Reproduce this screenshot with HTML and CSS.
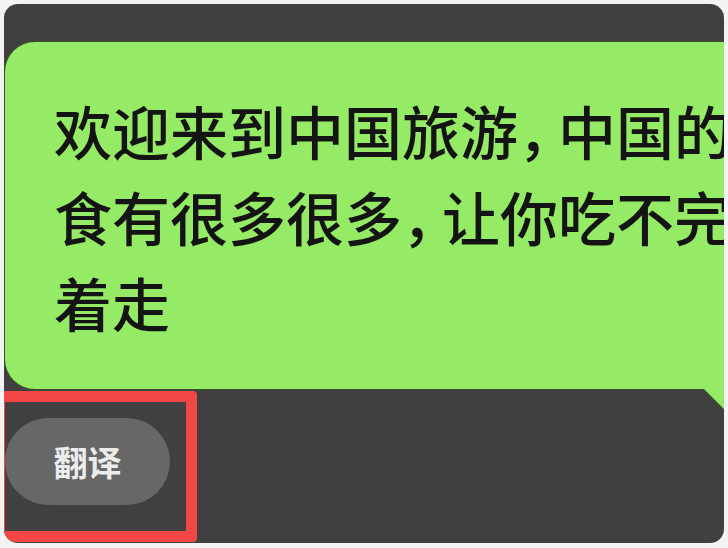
FILE: index.html
```html
<!DOCTYPE html>
<html lang="zh-CN">
<head>
<meta charset="utf-8">
<title>翻译</title>
<link rel="stylesheet" href="styles.css">
</head>
<body>
<div class="frame">
  <div class="bubble">
    <div class="line">欢迎来到中国旅游<span class="punct">，</span>中国的</div>
    <div class="line">食有很多很多<span class="punct">，</span>让你吃不完</div>
    <div class="line">着走</div>
  </div>
  <div class="actions">
    <div class="pill">翻译</div>
  </div>
  <div class="highlight"></div>
</div>
</body>
</html>
```

FILE: styles.css
```css
html, body {
  margin: 0;
  padding: 0;
  background: #f3f3f3;
}
body {
  width: 728px;
  height: 548px;
  overflow: hidden;
  font-family: "Noto Sans CJK SC", "Noto Sans", sans-serif;
}
.frame {
  position: relative;
  margin: 4px;
  width: 720px;
  height: 539px;
  border-radius: 14px;
  background: #404040;
  overflow: hidden;
  padding-top: 38px;
  box-sizing: border-box;
}
.bubble {
  position: relative;
  margin-left: 1px;
  width: 780px;
  box-sizing: border-box;
  padding: 45px 0 44px 49px;
  background: #95ea66;
  border-radius: 30px;
  filter: drop-shadow(0 0 1px #2f6a1c);
  color: #141414;
}
.bubble::after {
  content: "";
  position: absolute;
  left: 697px;
  top: calc(100% - 2px);
  width: 60px;
  height: 60px;
  background: #95ea66;
  clip-path: polygon(0 0, 100% 0, 100% 100%);
}
.line {
  font-size: 58px;
  font-weight: 500;
  line-height: 86px;
  white-space: nowrap;
}
.punct {
  letter-spacing: -18px;
}
.actions {
  display: flex;
  margin-top: 29px;
  padding-left: 1px;
}
.pill {
  width: 165px;
  height: 87px;
  border-radius: 44px;
  background: #676767;
  color: #ececec;
  font-size: 34px;
  font-weight: 700;
  display: flex;
  align-items: center;
  justify-content: center;
}
.highlight {
  position: absolute;
  left: -10px;
  top: 387px;
  width: 203px;
  bottom: 1px;
  box-sizing: border-box;
  border: 11px solid #f24745;
  border-radius: 4px;
}
```
